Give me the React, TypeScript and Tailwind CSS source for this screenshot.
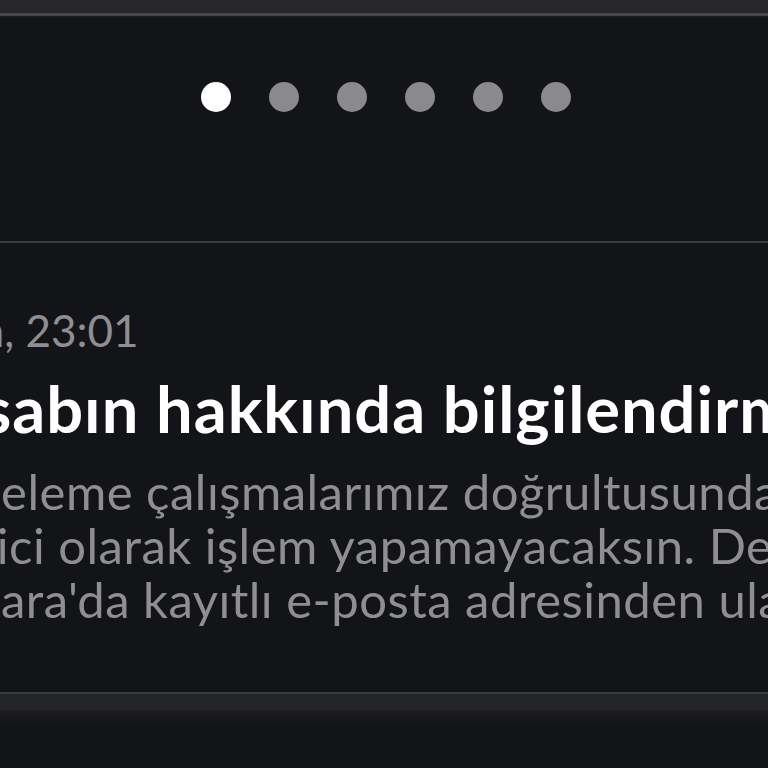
export default function App() {
  const font = { fontFamily: "Lato, 'Noto Sans', sans-serif" };

  return (
    <div
      className="flex h-[768px] w-[768px] flex-col overflow-hidden bg-[#131418]"
      style={font}
    >
      {/* top sheet edge */}
      <div className="h-[13px] shrink-0 bg-[#272729]" />
      <div className="h-[3px] shrink-0 bg-[#48484c]" />
      <div className="h-[2px] shrink-0 bg-[#1a1b1f]" />

      {/* pager dots */}
      <div className="flex shrink-0 justify-center gap-[38px] pl-[4px] pt-[64px]">
        <span className="h-[30px] w-[30px] rounded-full bg-white" />
        <span className="h-[30px] w-[30px] rounded-full bg-[#8a8a8d]" />
        <span className="h-[30px] w-[30px] rounded-full bg-[#8a8a8d]" />
        <span className="h-[30px] w-[30px] rounded-full bg-[#8a8a8d]" />
        <span className="h-[30px] w-[30px] rounded-full bg-[#8a8a8d]" />
        <span className="h-[30px] w-[30px] rounded-full bg-[#8a8a8d]" />
      </div>

      <div className="mt-[129px] h-[2px] shrink-0 bg-[#3c3d41]" />

      {/* notification */}
      <div className="whitespace-nowrap pt-[63px]">
        <div className="-ml-[78px] text-[44px] leading-[48px] text-[#8e8e93]">
          Dün, 23:01
        </div>
        <div className="-ml-[103px] mt-[22px] text-[65px] font-bold leading-[65px] tracking-[0.015em] text-white">
          Hesabın hakkında bilgilendirme
        </div>
        <div className="mt-[23px] text-[49px] leading-[54px] tracking-[0.01em] text-[#8e8e93]">
          <div className="-ml-[64px]">İnceleme çalışmalarımız doğrultusunda hesabınla</div>
          <div className="-ml-[79px]">geçici olarak işlem yapamayacaksın. Detaylı bilgi için</div>
          <div className="-ml-[81px]">Papara'da kayıtlı e-posta adresinden ulaşabilirsin.</div>
        </div>
      </div>

      <div className="flex-1" />

      {/* bottom sheet edge */}
      <div className="h-[2px] shrink-0 bg-[#3a3a3e]" />
      <div className="h-[16px] shrink-0 bg-[#242529]" />
      <div className="h-[14px] shrink-0 bg-gradient-to-b from-[#1e1e22] to-[#131418]" />
      <div className="h-[44px] shrink-0" />
    </div>
  );
}
